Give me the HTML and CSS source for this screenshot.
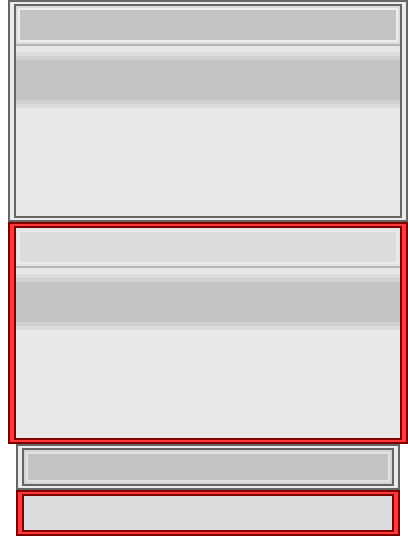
FILE: index.html
```html
<!DOCTYPE html>
<html lang="en">
<head>
    <meta charset="UTF-8">
    <meta name="viewport" content="width=device-width, initial-scale=1.0">
    <title>Panels</title>
    <link rel="stylesheet" href="styles.css">
</head>
<body>

    <div class="page">
        <!-- Panel normal -->
        <div class="panel">
            <div class="panel-inner">
                <div class="bar"><div class="bar-fill"></div></div>
                <div class="rule"></div>
                <div class="track"></div>
            </div>
        </div>

        <!-- Panel con error -->
        <div class="panel panel-error">
            <div class="panel-inner">
                <div class="bar"><div class="bar-fill"></div></div>
                <div class="rule"></div>
                <div class="track"></div>
            </div>
        </div>

        <!-- Campos -->
        <div class="field">
            <div class="field-inner"><div class="field-fill"></div></div>
        </div>
        <div class="field field-error">
            <div class="field-inner"><div class="field-fill"></div></div>
        </div>
    </div>

</body>
</html>
```

FILE: styles.css
```css
/* Estilo global */
* {
    margin: 0;
    padding: 0;
    box-sizing: border-box;
}

body {
    background-color: #ffffff;
    font-family: "Liberation Sans", Arial, sans-serif;
}

.page {
    padding-left: 8px;
    width: 408px;
}

/* Paneles */
.panel {
    width: 400px;
    height: 222px;
    border: 2px solid #666666;
    padding: 2px 4px;
    background-color: #ebebeb;
}

.panel-inner {
    height: 100%;
    border: 2px solid #666666;
    background-color: #e8e8e8;
    display: flex;
    flex-direction: column;
}

.bar {
    height: 38px;
    border: 2px solid #dcdcdc;
}

.bar-fill {
    height: 100%;
    border: 2px solid #eeeeee;
    background-color: #c4c4c4;
}

.rule {
    height: 2px;
    background-color: #b5b5b5;
}

.track {
    height: 62px;
    background: linear-gradient(#e6e6e6 0 6px, #dcdcdc 6px 10px, #d0d0d0 10px 14px,
        #c4c4c4 14px 54px, #d0d0d0 54px 58px, #dcdcdc 58px 62px);
}

.panel-error {
    border-color: #800000;
    background-color: #ff3b3b;
}

.panel-error .panel-inner {
    border-color: #800000;
}

.panel-error .bar {
    border-color: #e4e4e4;
}

.panel-error .bar-fill {
    border-color: #ebebeb;
    background-color: #dcdcdc;
}

/* Campos */
.field {
    margin-left: 8px;
    width: 384px;
    height: 46px;
    border: 2px solid #666666;
    padding: 2px 4px;
    background-color: #ebebeb;
}

.field-inner {
    height: 100%;
    border: 2px solid #666666;
    background-color: #d4d4d4;
    padding: 2px;
}

.field-fill {
    height: 100%;
    border: 2px solid #e2e2e2;
    background-color: #c4c4c4;
}

.field-error {
    border-color: #800000;
    background-color: #ff3b3b;
}

.field-error .field-inner {
    border-color: #800000;
    background-color: #dcdcdc;
    padding: 0;
}

.field-error .field-fill {
    border: none;
    background-color: #dcdcdc;
}
```
